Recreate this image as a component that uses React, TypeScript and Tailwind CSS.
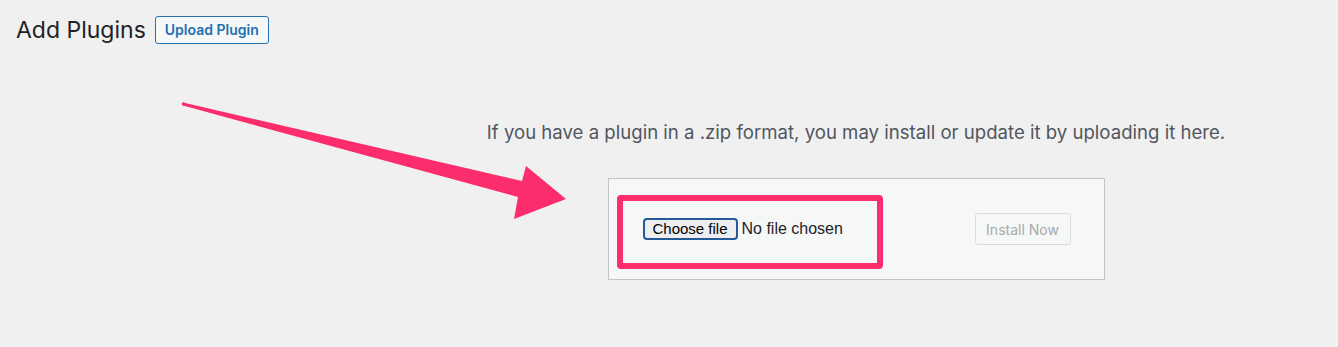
import React from "react";

export default function App() {
  return (
    <div className="relative w-[1338px] h-[347px] overflow-hidden bg-[#f0f0f1] font-['Inter',sans-serif] text-[#1d2327]">
      <div className="flex items-center gap-[9px] pl-4 pt-4">
        <h1 className="text-[23px] leading-[28px] font-normal text-[#1d2327]">Add Plugins</h1>
        <button className="h-7 px-[9px] rounded-[3px] border border-[#2271b1] bg-[#f6f7f7] text-[14px] font-semibold text-[#2271b1] leading-[26px]">
          Upload Plugin
        </button>
      </div>

      <div className="ml-[374px] mt-[76px] flex flex-col items-center">
        <p className="text-[18.6px] leading-[24px] text-[#50575e]">
          If you have a plugin in a .zip format, you may install or update it by uploading it here.
        </p>
        <div className="mt-[34px] w-[497px] h-[102px] border border-[#c3c4c7] bg-[#f6f7f7] flex items-center justify-between pl-[34px] pr-[33px]">
          <div className="flex items-center gap-[4px] font-['Liberation_Sans',sans-serif]">
            <div className="h-[22px] w-[95px] rounded-[4px] border-2 border-[#235a97] bg-[#eeeef0] flex items-center justify-center text-[15px] text-black">
              Choose file
            </div>
            <span className="text-[16px] text-[#1d2327]">No file chosen</span>
          </div>
          <div className="h-8 w-[96px] rounded-[3px] border border-[#dcdcde] bg-[#f6f7f7] flex items-center justify-center text-[14px] text-[#a7aaad]">
            Install Now
          </div>
        </div>
      </div>

      <div className="absolute left-[617px] top-[195px] w-[266px] h-[74px] rounded-[4px] border-[6px] border-[#fb2d6c]" />

      <svg className="absolute left-0 top-0 pointer-events-none" width="1338" height="347" viewBox="0 0 1338 347">
        <polygon
          fill="#fb2d6c"
          points="183,102.5 522,181 526,166 566,199 514,219 518,197 183,105.5"
        />
        <circle cx="183.5" cy="104" r="1.8" fill="#fb2d6c" />
      </svg>
    </div>
  );
}
